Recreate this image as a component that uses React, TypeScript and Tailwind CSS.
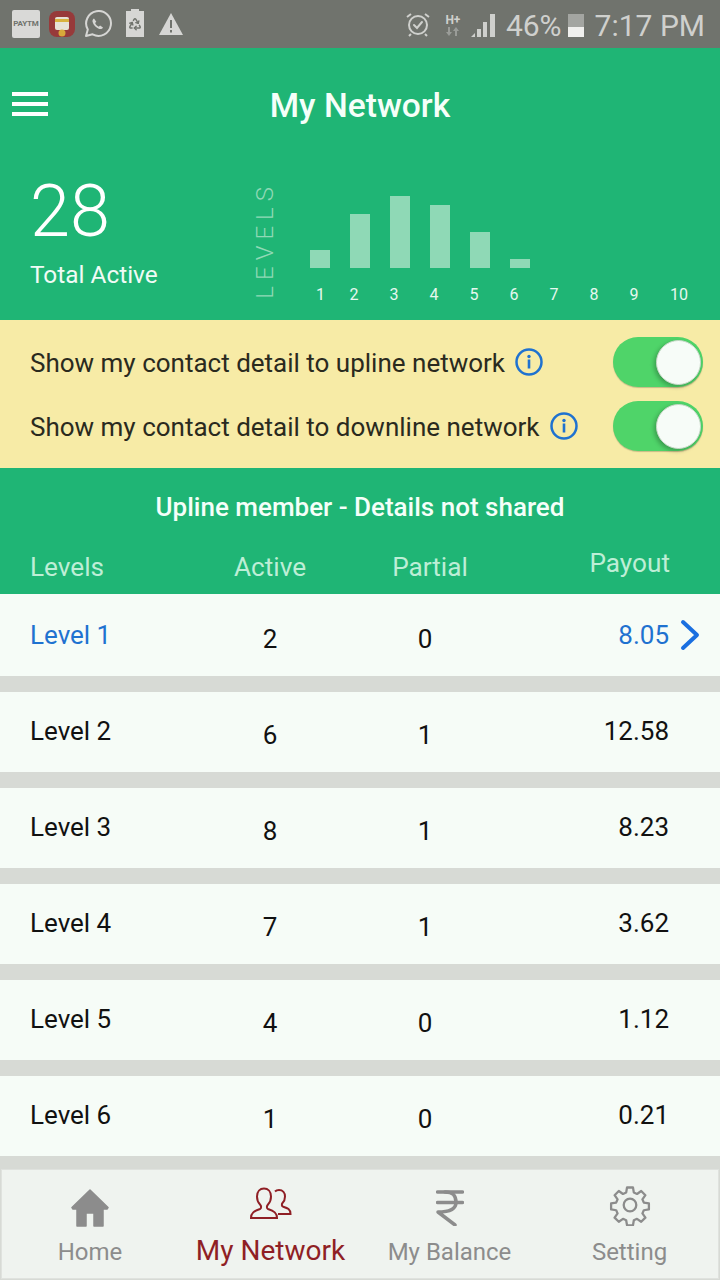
import { Recycle } from "lucide-react";

const bars = [18, 54, 72, 63, 36, 9];
const labels = ["1", "2", "3", "4", "5", "6", "7", "8", "9", "10"];

const rows = [
  { name: "Level 1", active: "2", partial: "0", payout: "8.05" },
  { name: "Level 2", active: "6", partial: "1", payout: "12.58" },
  { name: "Level 3", active: "8", partial: "1", payout: "8.23" },
  { name: "Level 4", active: "7", partial: "1", payout: "3.62" },
  { name: "Level 5", active: "4", partial: "0", payout: "1.12" },
  { name: "Level 6", active: "1", partial: "0", payout: "0.21" },
];

function StatusLeft() {
  return (
    <div className="flex items-center">
      <div className="ml-3 flex h-7 w-7 items-center justify-center rounded-[2px] bg-[#d9d9d7] text-[8px] font-bold uppercase leading-none tracking-[-0.2px] text-[#70736d]">
        Paytm
      </div>
      <svg width="26" height="26" viewBox="0 0 26 26" className="ml-[9px]">
        <rect x="0" y="0" width="26" height="26" rx="8" fill="#973a3a" />
        <rect x="6" y="6" width="14" height="13" rx="2" fill="#e6e3d8" />
        <rect x="6" y="8" width="14" height="3" fill="#d8b340" />
        <circle cx="13" cy="22" r="3.5" fill="#d8a93a" />
      </svg>
      <svg width="28" height="28" viewBox="0 0 28 28" fill="none" className="ml-[9px]">
        <path
          d="M2 26l1.8-6.4A12.4 12.4 0 1 1 8.6 24.3z"
          stroke="#d6d6d4"
          strokeWidth="2"
          strokeLinejoin="round"
        />
        <path
          d="M10 8.5c-1.2.5-1.8 2-1.4 3.6.8 3 3.6 5.8 6.6 6.8 1.7.5 3.2-.2 3.8-1.5l-2.9-1.8-1.4 1.2c-1.500-.8-2.900-2.200-3.600-3.800l1.200-1.300z"
          fill="#d6d6d4"
        />
      </svg>
      <div className="relative ml-[14px] flex h-[26px] w-[18px] items-center justify-center bg-[#d6d6d4]">
        <div className="absolute -top-[2px] left-[5px] h-[2px] w-2 bg-[#d6d6d4]" />
        <Recycle size={14} color="#70736d" strokeWidth={2.5} />
      </div>
      <svg width="24" height="22" viewBox="0 0 24 22" className="ml-[15px]">
        <path d="M12 0l12 22H0z" fill="#d6d6d4" />
        <rect x="11" y="7" width="2" height="8" fill="#70736d" />
        <rect x="11" y="17" width="2" height="2.500" fill="#70736d" />
      </svg>
    </div>
  );
}

function StatusRight() {
  return (
    <div className="flex items-center">
      <svg width="24" height="25" viewBox="0 0 24 25" fill="none" stroke="#cfd0cd" strokeWidth="2">
        <circle cx="12" cy="13" r="9" />
        <path d="M8 13l3 3 5-6" strokeLinecap="round" />
        <path d="M1 5l4-3M23 5l-4-3M5 22l-2 2M19 22l2 2" />
      </svg>
      <div className="ml-[14px] flex w-[18px] flex-col items-center">
        <span className="text-[12px] font-bold leading-[14px] text-[#cfd0cd]">H+</span>
        <svg width="14" height="9" viewBox="0 0 14 9" fill="#9a9c98">
          <path d="M3 9L0 5h2V0h2v5h2zM10 0l3 4h-2v5H9V4H7z" />
        </svg>
      </div>
      <svg width="24" height="24" viewBox="0 0 24 24" className="ml-[9px] mt-[1px]">
        <path d="M0 24l4-4v4z" fill="#cfd0cd" />
        <rect x="6" y="16" width="4" height="8" fill="#cfd0cd" />
        <rect x="12" y="9" width="4" height="15" fill="#cfd0cd" />
        <rect x="19" y="1" width="5" height="23" fill="#cfd0cd" />
      </svg>
      <span className="ml-[11px] pt-[3px] text-[30px] leading-none text-[#cfd0cd]">46%</span>
      <div className="ml-[6px] mt-[2px] flex h-[23px] w-4 flex-col bg-[#a3a5a1]">
        <div className="mt-auto h-[10px] bg-[#f0f0ee]" />
      </div>
      <span className="ml-[11px] pt-[3px] text-[30px] leading-none text-[#cfd0cd]">7:17 PM</span>
    </div>
  );
}

function InfoIcon() {
  return (
    <svg width="28" height="28" viewBox="0 0 28 28" fill="none" className="shrink-0">
      <circle cx="14" cy="14" r="12.500" stroke="#1f72d0" strokeWidth="2.500" />
      <circle cx="14" cy="8.500" r="1.700" fill="#1f72d0" />
      <rect x="12.700" y="11.500" width="2.600" height="9" fill="#1f72d0" />
    </svg>
  );
}

function Toggle() {
  return (
    <div className="flex h-[50px] w-[90px] items-center justify-end rounded-full bg-[#4fd469] pr-[2px] shadow-[0_1px_1px_rgba(0,0,0,0.2)]">
      <div className="h-[45px] w-[45px] rounded-full border border-[#c8d8c8] bg-[#f7fcf8] shadow-[-2px_2px_4px_rgba(0,0,0,0.25)]" />
    </div>
  );
}

function HomeIcon() {
  return (
    <svg width="38" height="38" viewBox="0 0 38 38" fill="#8c8c8c">
      <path
        d="M19 1L37 18.500 36 20H32V37H23V24H15V37H6V20H2L1 18.500z"
        stroke="#8c8c8c"
        strokeWidth="1.500"
        strokeLinejoin="round"
      />
    </svg>
  );
}

function PeopleIcon() {
  return (
    <svg width="44" height="34" viewBox="0 0 44 34" fill="none" stroke="#8f1f25" strokeWidth="2">
      <path d="M2 31c0-5 3-7 9-9 1.500-.6 1.500-3 0-4.500-2-2-3-4.500-3-8C8 4.500 11 1.500 15 1.500s7 3 7 8c0 3.500-1 6-3 8-1.500 1.500-1.500 3.900 0 4.500 6 2 9 4 9 9z" />
      <path d="M26 4.500c1-1 2.500-1.500 4-1.500 3.800 0 6 2.800 6 6.500 0 3-1 5-2.500 6.500-1 1.200-.8 3 .5 3.600 4.500 1.500 7.500 2.400 7.500 7.400H29" />
    </svg>
  );
}

function RupeeIcon() {
  return (
    <svg width="28" height="36" viewBox="0 0 28 36" fill="none" stroke="#8c8c8c" strokeWidth="3.500" strokeLinecap="round">
      <path d="M1.500 2h25M1.500 12.500h25" />
      <path d="M9 2c8 0 11 3.500 11 10.500 0 5.500-5 9.500-18 9.500l17 13" strokeLinejoin="round" />
    </svg>
  );
}

function GearIcon() {
  return (
    <svg width="42" height="42" viewBox="0 0 24 24" fill="none" stroke="#8c8c8c" strokeWidth="1.300" strokeLinejoin="round">
      <circle cx="12" cy="12" r="3.600" />
      <path d="M10.300 2h3.400l.5 2.900 1.800.8 2.400-1.700 2.400 2.400-1.700 2.400.8 1.800 2.900.5v3.400l-2.900.5-.8 1.800 1.700 2.400-2.400 2.400-2.400-1.700-1.800.8-.5 2.900h-3.400l-.5-2.900-1.800-.8-2.400 1.700-2.400-2.400 1.700-2.400-.8-1.800-2.900-.5v-3.400l2.900-.5.8-1.800-1.700-2.400 2.400-2.400 2.400 1.700 1.800-.8z" />
    </svg>
  );
}

export default function App() {
  return (
    <div className="relative flex h-[1280px] w-[720px] flex-col overflow-hidden bg-[#d7dad5] font-['Roboto',sans-serif]">
      {/* status bar */}
      <div className="flex h-12 shrink-0 items-center justify-between bg-[#70736d] pr-[15px]">
        <StatusLeft />
        <StatusRight />
      </div>

      {/* header */}
      <div className="h-[272px] shrink-0 bg-[#1fb575]">
        <div className="relative flex h-[116px] items-center justify-center">
          <div className="absolute left-3 top-[44px] flex w-9 flex-col gap-[6px]">
            <div className="h-1 bg-white" />
            <div className="h-1 bg-white" />
            <div className="h-1 bg-white" />
          </div>
          <h1 className="text-[33.6px] font-medium leading-none text-[#f5fff9]">My Network</h1>
        </div>
        <div className="flex">
          <div className="w-[256px] pl-[30px] pt-[13px]">
            <div className="text-[72px] font-light leading-[70px] text-white">28</div>
            <div className="mt-[14px] text-[24.4px] leading-7 text-[#f0fbf5]">Total Active</div>
          </div>
          <span className="mt-[17px] h-fit rotate-180 text-[24px] font-light leading-[18px] tracking-[6px] text-[#8fd9b6] [writing-mode:vertical-rl]">
            LEVELS
          </span>
          <div className="ml-[36px] flex flex-col">
            <div className="flex h-[104px] items-end gap-5">
              {bars.map((h, i) => (
                <div key={i} className="w-5 bg-[#8fd9b6]" style={{ height: h }} />
              ))}
            </div>
            <div className="mt-[17px] flex h-5 w-[400px] text-[16px] leading-5 text-[#e6f8ef]">
              {labels.map((l, i) => (
                <span
                  key={l}
                  className={
                    i === 0
                      ? "w-6 pl-[6px]"
                      : i === 9
                      ? "ml-[5px] w-10 text-center"
                      : "w-10 text-center"
                  }
                >
                  {l}
                </span>
              ))}
            </div>
          </div>
        </div>
      </div>

      {/* contact toggles */}
      <div className="flex h-[148px] shrink-0 flex-col justify-center gap-[14px] bg-[#f7eba6] pl-[30px] pr-[17px] text-[26px] leading-[50px] text-[#2a2a1e]">
        <div className="flex h-[50px] items-center">
          <span className="pt-[2px]">Show my contact detail to upline network</span>
          <div className="ml-[10px]"><InfoIcon /></div>
          <div className="ml-auto"><Toggle /></div>
        </div>
        <div className="flex h-[50px] items-center">
          <span className="pt-[2px]">Show my contact detail to downline network</span>
          <div className="ml-[10px]"><InfoIcon /></div>
          <div className="ml-auto"><Toggle /></div>
        </div>
      </div>

      {/* table head */}
      <div className="h-[126px] shrink-0 bg-[#1fb575]">
        <div className="pt-[22px] text-center text-[26px] font-medium leading-[34px] text-[#f5fff9]">
          Upline member - Details not shared
        </div>
        <div className="mt-[28px] flex text-[26.2px] leading-[30px] text-[#bdeed6]">
          <span className="w-[180px] pl-[30px]">Levels</span>
          <span className="w-[180px] text-center">Active</span>
          <span className="w-[140px] text-center">Partial</span>
          <span className="-mt-1 ml-auto pr-[50px]">Payout</span>
        </div>
      </div>

      {/* level rows */}
      <div className="flex flex-col gap-4">
        {rows.map((r, i) => {
          const first = i === 0;
          return (
            <div
              key={r.name}
              className={`flex items-center bg-[#f6fcf7] text-[26px] leading-[30px] ${
                first ? "h-[82px] text-[#1f72d0]" : "h-20 pb-[2px] text-[#111]"
              }`}
            >
              <span className="w-[180px] pl-[30px]">{r.name}</span>
              <span className={`mt-2 w-[180px] text-center ${first ? "text-[#111]" : ""}`}>
                {r.active}
              </span>
              <span className={`mt-2 w-[130px] text-center ${first ? "text-[#111]" : ""}`}>
                {r.partial}
              </span>
              <span className="ml-auto pr-[51px]">{r.payout}</span>
              {first && (
                <svg width="20" height="32" viewBox="0 0 20 32" fill="none" className="absolute right-[20px]">
                  <path d="M3 3l14 13L3 29" stroke="#1a6fe0" strokeWidth="4" strokeLinecap="round" strokeLinejoin="round" />
                </svg>
              )}
            </div>
          );
        })}
      </div>

      {/* tab bar */}
      <div className="absolute bottom-[2px] left-[2px] right-[2px] flex h-[108px] items-stretch bg-[#eff3ef] outline outline-1 outline-[#dfe2de]">
        <div className="flex w-[176px] flex-col items-center pt-[19px] text-[#8c8c8c]">
          <HomeIcon />
          <span className="mt-[11px] text-[24px] leading-7">Home</span>
        </div>
        <div className="flex w-[185px] flex-col items-center pt-[17px] text-[#8f1f25]">
          <PeopleIcon />
          <span className="mt-[14px] text-[28px] leading-8">My Network</span>
        </div>
        <div className="flex w-[173px] flex-col items-center pt-[20px] text-[#8c8c8c]">
          <RupeeIcon />
          <span className="mt-3 text-[24px] leading-7">My Balance</span>
        </div>
        <div className="flex w-[182px] flex-col items-center pl-[5px] pt-[14px] text-[#8c8c8c]">
          <GearIcon />
          <span className="mt-3 text-[24px] leading-7">Setting</span>
        </div>
      </div>
    </div>
  );
}
